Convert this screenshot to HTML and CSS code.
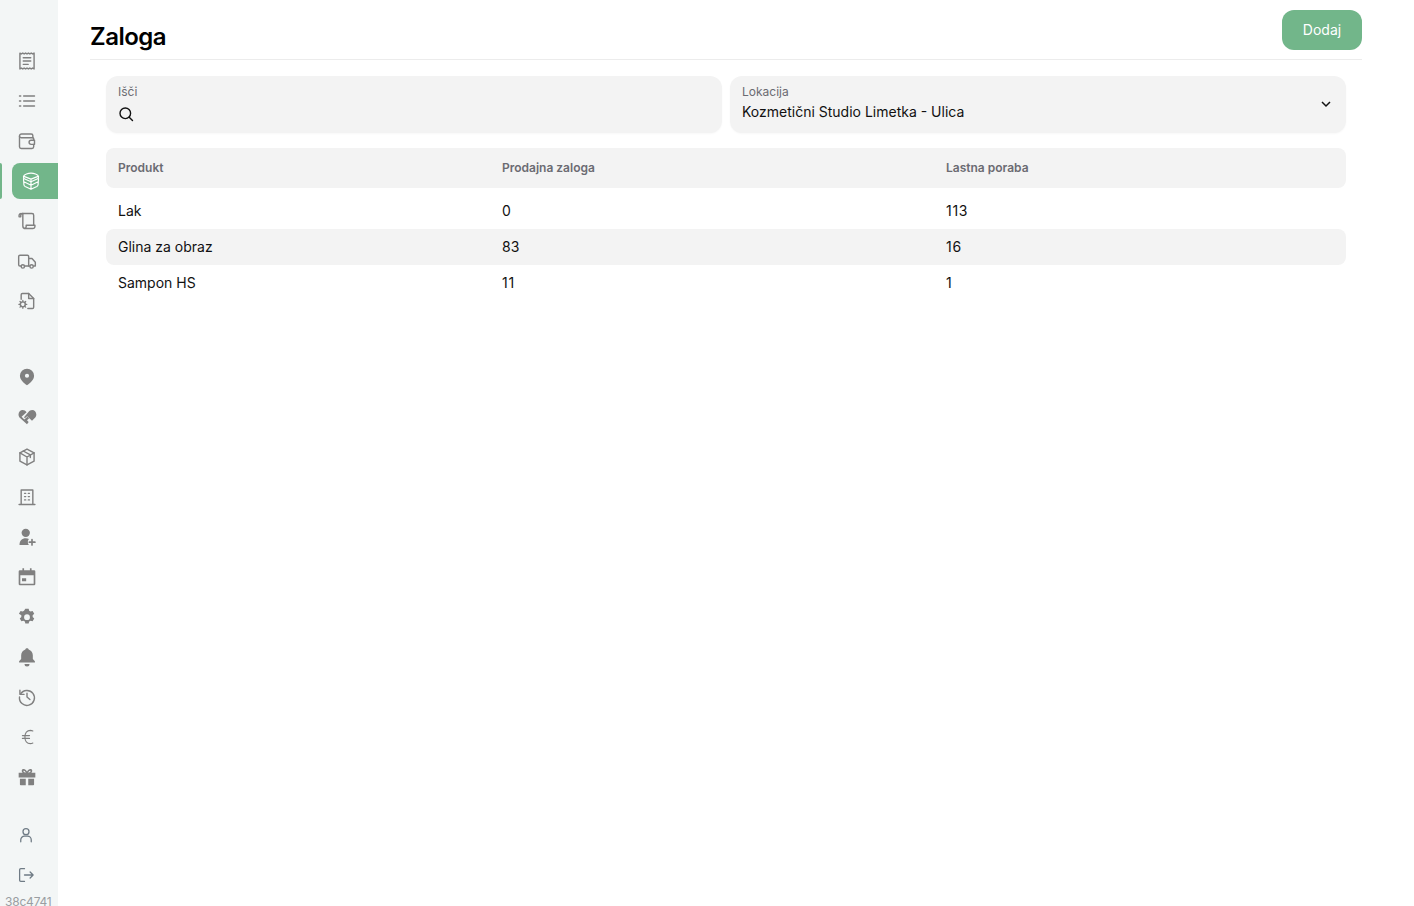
FILE: index.html
```html
<!DOCTYPE html>
<html lang="sl">
<head>
<meta charset="utf-8">
<title>Zaloga</title>
<link rel="stylesheet" href="styles.css">
</head>
<body>
<div class="app">
  <aside class="sidebar">
    <nav class="group group-a">
      <a class="item"><svg viewBox="0 0 24 24" class="ic"><path d="M3.500 2.500l1.700 1 1.700-1 1.700 1 1.700-1 1.700 1 1.700-1 1.700 1 1.700-1 1.700 1 1.700-1v19l-1.700-1-1.700 1-1.700-1-1.700 1-1.700-1-1.700 1-1.700-1-1.700 1-1.700-1-1.700 1z"/><path d="M7.500 8h9M7.500 12h9M7.500 16h6"/></svg></a>
      <a class="item"><svg viewBox="0 0 24 24" class="ic"><path d="M8 6h13M8 12h13M8 18h13M3 6h1.500M3 12h1.500M3 18h1.500"/></svg></a>
      <a class="item"><svg viewBox="0 0 24 24" class="ic"><path d="M19 8V5.500A2 2 0 0 0 17 3.500H5.500A2.500 2.500 0 0 0 3 6v13a2 2 0 0 0 2 2h13a2 2 0 0 0 2-2v-3"/><path d="M3 6.500A2 2 0 0 0 5 8h14a1 1 0 0 1 1 1v2"/><path d="M21 11h-4a1.500 1.500 0 0 0 0 5h4z"/></svg></a>
      <a class="item active"><svg viewBox="0 0 24 24" class="ic"><path d="M12 2.500c3 0 8.500 1.500 9 4 .2 1-.2 2-1 2.800L12 13 4 9.300c-.8-.8-1.200-1.800-1-2.800.5-2.500 6-4 9-4z"/><path d="M3.500 6.500L12 9.800l8.500-3.300M12 9.800V13M3 9l.5 7.500c.1 1 .6 1.700 1.500 2.200l7 3.300 7-3.300c.9-.5 1.400-1.200 1.500-2.200L21 9M12 13v9M3.500 13L12 17l8.500-4"/></svg></a>
      <a class="item"><svg viewBox="0 0 24 24" class="ic"><path d="M7 3h11a2 2 0 0 1 2 2v12"/><path d="M7 3a2.500 2.500 0 0 0-2.500 2.500V7H2.500V5.500A2.500 2.500 0 0 1 5 3"/><path d="M7 3v15a3 3 0 0 0 3 3h9a2.500 2.500 0 0 0 2.500-2.500V17H11v1.500A2.500 2.500 0 0 1 8.500 21"/></svg></a>
      <a class="item"><svg viewBox="0 0 24 24" class="ic"><path d="M5 18H3.500A1.500 1.500 0 0 1 2 16.500v-10A1.500 1.500 0 0 1 3.500 5h9A1.500 1.500 0 0 1 14 6.500V18H9"/><path d="M14 9h4l4 4.500V18h-2M15 18h-1"/><circle cx="7" cy="18.500" r="2"/><circle cx="17.500" cy="18.500" r="2"/></svg></a>
      <a class="item"><svg viewBox="0 0 24 24" class="ic"><path d="M5 10V4.500A1.500 1.500 0 0 1 6.500 3H14l6 6v10.500a1.500 1.500 0 0 1-1.500 1.500H13"/><path d="M14 3v6h6"/><circle cx="7" cy="16" r="3"/><path class="fine" d="M7 11.200v1.800M7 19v1.800M2.200 16H4M10 16h1.800M3.600 12.600l1.200 1.200M9.200 18.200l1.200 1.200M3.600 19.400l1.200-1.200M9.200 13.800l1.200-1.200"/></svg></a>
    </nav>
    <nav class="group group-b">
      <a class="item"><svg viewBox="0 0 24 24" class="ic solid"><path fill-rule="evenodd" d="M12 2a8.500 8.500 0 0 1 8.500 8.500c0 5-5 9-8.500 11.500-3.500-2.500-8.500-6.500-8.500-11.500A8.500 8.500 0 0 1 12 2zm0 6a2.500 2.500 0 1 0 0 5 2.500 2.500 0 0 0 0-5z"/></svg></a>
      <a class="item"><svg viewBox="0 0 24 24" class="ic solid"><path d="M11.500 6.200l-2 1.800-4 3.800 3.300 3.200 3.700-3.400 2 1.800-2.500 2.500 2 2L12 20.800 4 13.600C2.500 12.200 1.800 10.600 1.800 9c0-3 2.300-5.300 5-5.300 1.800 0 3.500.9 4.700 2.500z"/><path d="M13.500 6.300c1.200-1.600 2.900-2.600 4.700-2.600 2.700 0 5 2.300 5 5.300 0 1.600-.7 3.200-2.200 4.600l-3 2.800-5.800-5.400-2.700 2.500-1.100-1.100z"/></svg></a>
      <a class="item"><svg viewBox="0 0 24 24" class="ic"><path d="M12 2.500l8.500 4.500v10L12 21.500 3.500 17V7z"/><path d="M3.500 7L12 12l8.500-5M12 12v9.500M7.500 4.800l8.500 4.700v3"/></svg></a>
      <a class="item"><svg viewBox="0 0 24 24" class="ic"><path d="M5 21V3.500h14V21M2.500 21h19"/><path class="fine" d="M9 7.500h1.500M13.500 7.500H15M9 11.500h1.500M13.500 11.500H15M9 15.500h1.500M13.500 15.500H15"/></svg></a>
      <a class="item"><svg viewBox="0 0 24 24" class="ic solid"><circle cx="10.500" cy="7" r="5"/><path d="M3 21.500c0-5 3-8 7.500-8 1.500 0 2.800.3 3.800 1-.8 1-1.300 2.200-1.300 3.500 0 1.300.4 2.500 1.200 3.500z"/><path d="M18 15v6.500M14.800 18.200h6.700" class="plus"/></svg></a>
      <a class="item"><svg viewBox="0 0 24 24" class="ic solid"><path fill-rule="evenodd" d="M6.500 1.500h2V4h7V1.500h2V4h3A1.500 1.500 0 0 1 22 5.500v15a1.500 1.500 0 0 1-1.500 1.500h-17A1.500 1.500 0 0 1 2 20.500v-15A1.500 1.500 0 0 1 3.500 4h3zM4 10v10h16V10zm2 3.500h5v3.500H6z"/></svg></a>
      <a class="item"><svg viewBox="0 0 24 24" class="ic solid"><path fill-rule="evenodd" d="M10 1.800h4l.6 2.600 1.600.9 2.500-.8 2 3.500-1.900 1.800v1.900l1.900 1.800-2 3.500-2.500-.8-1.600.9-.6 2.600h-4l-.6-2.600-1.600-.9-2.500.8-2-3.500 1.900-1.800v-1.900L2.300 8l2-3.500 2.500.8 1.600-.9zM12 8.500a3.500 3.500 0 1 0 0 7 3.500 3.500 0 0 0 0-7z" transform="translate(0 .2)"/></svg></a>
      <a class="item"><svg viewBox="0 0 24 24" class="ic solid"><path d="M12 1.500c1 0 1.800.6 2 1.500 3.200 1 5 3.800 5 7v4.500l2.500 2.500v1.500h-19V17L5 14.500V10c0-3.200 1.800-6 5-7 .2-.9 1-1.500 2-1.500z"/><path d="M9 20.500h6a3 3 0 0 1-6 0z"/></svg></a>
      <a class="item"><svg viewBox="0 0 24 24" class="ic"><path d="M4.200 8.500A9 9 0 1 1 3 12"/><path d="M3.500 3.800v5h5M12 7.500V12l3.500 3"/></svg></a>
      <a class="item"><svg viewBox="0 0 24 24" class="ic thin"><path d="M19 4.800a7 7 0 0 0-3-.8c-4 0-6.500 3.400-6.500 8s2.500 8 6.500 8a7 7 0 0 0 3-.8M6.500 10.300h8.500M6.500 13.700h8.500"/></svg></a>
      <a class="item"><svg viewBox="0 0 24 24" class="ic solid"><path fill-rule="evenodd" d="M7 2.500c1.800-.8 3.700.4 5 3 1.300-2.600 3.200-3.800 5-3 1.800.9 1.700 3.300.3 4.500H22v5.500H2V7h4.700C5.300 5.800 5.200 3.400 7 2.500zM8 4.500c-.7.300-.2 2 2.500 2.500C10 5.200 9 4.100 8 4.500zm8 0c-1-.4-2 .7-2.500 2.500 2.700-.5 3.200-2.200 2.500-2.500z"/><path d="M3.500 14h7v8h-6a1 1 0 0 1-1-1zM13.500 14h7v7a1 1 0 0 1-1 1h-6z"/></svg></a>
    </nav>
    <nav class="group group-c">
      <a class="item muted-blue"><svg viewBox="0 0 24 24" class="ic"><circle cx="12" cy="7.500" r="4"/><path d="M5 21v-2.500a5 5 0 0 1 5-5h4a5 5 0 0 1 5 5V21"/></svg></a>
      <a class="item muted-blue"><svg viewBox="0 0 24 24" class="ic"><path d="M10 3.500H5a1.500 1.500 0 0 0-1.500 1.500v14A1.500 1.500 0 0 0 5 20.500h5M10 12h11.500M17.500 8l4 4-4 4"/></svg></a>
    </nav>
    <div class="version">38c4741</div>
  </aside>
  <main class="main">
    <header class="head">
      <h1 class="title">Zaloga</h1>
      <button class="add" type="button">Dodaj</button>
    </header>
    <section class="content">
      <div class="filters">
        <div class="field">
          <label class="field-label">Išči</label>
          <div class="field-value"><svg class="search" viewBox="0 0 16 16"><circle cx="7.300" cy="7.300" r="5.300"/><path d="M11.200 11.200L14.500 14.500"/></svg></div>
        </div>
        <div class="field field-select">
          <label class="field-label">Lokacija</label>
          <div class="field-value">Kozmetični Studio Limetka - Ulica</div>
          <svg class="chev" viewBox="0 0 12 12"><path d="M2 4l4 4 4-4"/></svg>
        </div>
      </div>
      <div class="table">
        <div class="row row-head"><div>Produkt</div><div>Prodajna zaloga</div><div>Lastna poraba</div></div>
        <div class="row first"><div>Lak</div><div>0</div><div class="wide-one">113</div></div>
        <div class="row striped"><div>Glina za obraz</div><div>83</div><div class="wide-one">16</div></div>
        <div class="row"><div>Sampon HS</div><div class="wide-one">11</div><div>1</div></div>
      </div>
    </section>
  </main>
</div>
</body>
</html>
```
FILE: styles.css
```css
* { box-sizing: border-box; }
html, body { margin: 0; height: 100%; overflow: hidden; }
body { font-family: Inter, "Liberation Sans", sans-serif; color: #0a0a0a; background: #fff; }
.app { display: flex; height: 906px; overflow: hidden; }

.sidebar { width: 58px; flex: none; background: #f3f6f6; display: flex; flex-direction: column; padding-top: 41px; overflow: hidden; }
.group { display: flex; flex-direction: column; }
.group-b { margin-top: 36px; }
.group-c { margin-top: 18px; }
.item { height: 40px; display: flex; align-items: center; padding-left: 17px; color: #808080; position: relative; flex: none; }
.muted-blue { color: #6f7b85; padding-left: 17px; }
.muted-blue .ic { width: 18px; height: 18px; }
.ic { width: 20px; height: 20px; fill: none; stroke: currentColor; stroke-width: 1.7; stroke-linecap: round; stroke-linejoin: round; display: block; }
.ic.thin { stroke-width: 1.4; }
.ic .fine { stroke-width: 1.5; }
.ic.solid { fill: currentColor; stroke: none; }
.ic .plus { fill: none; stroke: currentColor; stroke-width: 2; }
.item.active { color: #fff; margin: 2px 0 2px 12px; height: 36px; padding-left: 9px; background: #72b68a; border-radius: 8px 0 0 8px; }
.item.active .ic { stroke-width: 1.4; }
.item.active::before { content: ""; position: absolute; left: -12px; top: 0; bottom: 0; width: 2px; background: #72b68a; border-radius: 0 3px 3px 0; }
.version { font-size: 12px; line-height: 16px; color: #9a9ea2; margin-top: -1px; padding-left: 5px; white-space: nowrap; letter-spacing: -0.2px; }

.main { flex: 1; padding: 0 52px 0 32px; min-width: 0; }
.head { height: 60px; display: flex; justify-content: space-between; align-items: flex-start; border-bottom: 1px solid #ececec; }
.title { margin: 20px 0 0; font-size: 24px; line-height: 34px; font-weight: 600; color: #000; letter-spacing: -0.5px; }
.add { width: 80px; height: 40px; margin-top: 10px; padding: 0 0 2px; border: 0; border-radius: 12px; background: #72b68a; color: #fff; font: 400 14px Inter, sans-serif; }
.content { padding: 16px; }
.filters { display: flex; gap: 8px; }
.field { flex: 1; height: 57px; background: #f3f3f3; border-radius: 12px; padding: 8px 12px; position: relative; box-shadow: 0 1px 2px rgba(0,0,0,.03); }
.field-label { display: block; font-size: 12px; line-height: 16px; color: #6b6b72; }
.field-value { font-size: 14px; line-height: 20px; margin-top: 2px; height: 20px; color: #111; display: flex; align-items: center; }
.search { width: 16px; height: 16px; margin-top: 4px; fill: none; stroke: #111; stroke-width: 1.4; stroke-linecap: round; }
.chev { position: absolute; right: 14px; top: 22px; width: 12px; height: 12px; fill: none; stroke: #111; stroke-width: 1.5; }

.table { margin-top: 15px; }
.row { display: grid; grid-template-columns: 384px 444px 412px; height: 36px; align-items: center; padding: 0 0 2px 12px; font-size: 14px; color: #111; border-radius: 8px; }
.wide-one { letter-spacing: 0.7px; }
.row-head { height: 40px; background: #f3f3f3; font-size: 12px; font-weight: 600; color: #6b6b72; }
.row.first { margin-top: 5px; }
.striped { background: #f3f3f3; }
```
